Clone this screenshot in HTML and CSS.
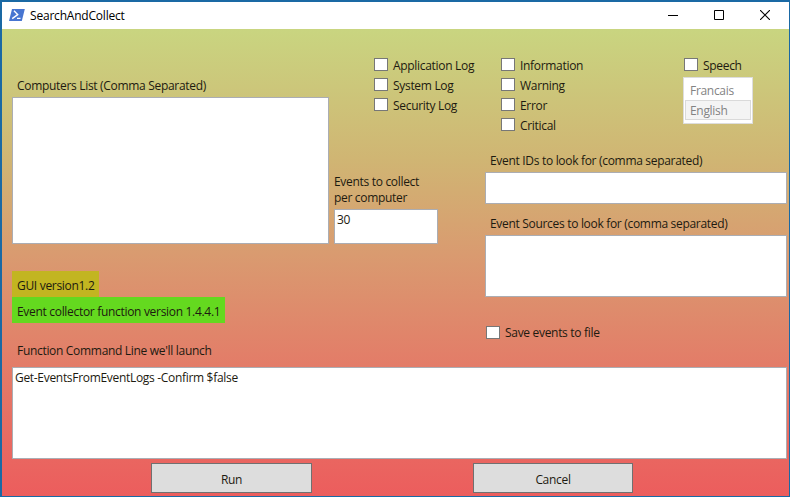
FILE: index.html
```html
<!DOCTYPE html>
<html lang="en">
<head>
<meta charset="utf-8">
<title>SearchAndCollect</title>
<link rel="stylesheet" href="styles.css">
</head>
<body>
<div class="window">
  <header class="titlebar">
    <svg class="logo" width="16" height="12" viewBox="0 0 16 12"><path d="M3 0H15.8L12.8 12H0Z" fill="#4775d1"/><path d="M5 1.8L8.7 5.6L3.2 9.6M8 9.4H11.5" fill="none" stroke="#fff" stroke-width="1.4"/></svg>
    <span class="title">SearchAndCollect</span>
    <div class="controls">
      <svg width="10" height="10" viewBox="0 0 10 10"><path d="M0 5.5H10" stroke="#000"/></svg>
      <svg width="10" height="10" viewBox="0 0 10 10"><path d="M.5.5H9.5V9.5H.5Z" fill="none" stroke="#000"/></svg>
      <svg width="10" height="10" viewBox="0 0 10 10"><path d="M0 0L10 10M10 0L0 10" stroke="#000" stroke-width="1.1"/></svg>
    </div>
  </header>
  <main class="client">
    <div class="columns">
      <section class="left">
        <div class="label computers-label">Computers List (Comma Separated)</div>
        <div class="box computers"></div>
        <div class="tag gui">GUI version1.2</div>
        <div class="tag collector">Event collector function version 1.4.4.1</div>
        <div class="label command-label">Function Command Line we'll launch</div>
      </section>
      <section class="middle">
        <div class="checks logs">
          <div class="check"><i></i><span>Application Log</span></div>
          <div class="check"><i></i><span>System Log</span></div>
          <div class="check"><i></i><span>Security Log</span></div>
        </div>
        <div class="count-label">Events to collect<br>per computer</div>
        <div class="box count">30</div>
      </section>
      <section class="right">
        <div class="options">
          <div class="checks">
            <div class="check"><i></i><span>Information</span></div>
            <div class="check"><i></i><span>Warning</span></div>
            <div class="check"><i></i><span>Error</span></div>
            <div class="check"><i></i><span>Critical</span></div>
          </div>
          <div class="speech">
            <div class="check"><i></i><span>Speech</span></div>
            <div class="list"><div>Francais</div><div class="selected">English</div></div>
          </div>
        </div>
        <div class="label ids-label">Event IDs to look for (comma separated)</div>
        <div class="box ids"></div>
        <div class="label sources-label">Event Sources to look for (comma separated)</div>
        <div class="box sources"></div>
        <div class="check save"><i></i><span>Save events to file</span></div>
      </section>
    </div>
    <div class="box command">Get-EventsFromEventLogs -Confirm $false</div>
    <div class="buttons"><div class="button run">Run</div><div class="button">Cancel</div></div>
  </main>
</div>
</body>
</html>
```
FILE: styles.css
```css
* { box-sizing: border-box; }
body { margin: 0; }
.window {
  width: 790px; height: 497px; overflow: hidden;
  border: solid #1a69a4; border-width: 2px 1px 1px 2px;
  font: 12px/16px "Open Sans", "Noto Sans", sans-serif;
  letter-spacing: -0.31px;
  color: #1d1a10; white-space: nowrap;
}
.titlebar { display: flex; align-items: center; height: 27px; padding: 0 19px 0 7px; background: #fff; color: #000; }
.logo { margin-top: -2px; }
.title { margin-left: 5px; letter-spacing: -0.2px; }
.controls { display: flex; gap: 36px; margin: -1px 0 0 auto; }
.controls svg, .logo { display: block; }
.client { height: 467px; padding: 0 2px 0 10px; background: linear-gradient(#c9d580 0%, #d0b573 28%, #d99b70 48%, #e37c68 72%, #ec5d5d 100%); }
.columns { display: grid; grid-template-columns: 322px 151px 302px; height: 338px; }
.box { background: #fff; border: 1px solid #abadb3; padding: 2px 2px 0; }
.label { padding: 1px 0 0 5px; height: 16px; }
.computers-label { margin-top: 48px; }
.computers { width: 317px; height: 147px; margin-top: 4px; }
.tag { width: max-content; height: 26px; padding: 7px 5px 3px; }
.gui { width: 87px; margin-top: 27px; background: #c2b521; }
.collector { width: 213px; background: #64d91f; }
.command-label { margin-top: 19px; }
.check { display: flex; align-items: center; height: 20px; }
.check i { width: 14px; height: 13px; margin: -1px 5px 0 0; background: #fff; border: 1px solid #777; }
.check span { padding-top: 2px; }
.logs { margin: 26px 0 0 40px; height: 60px; }
.count-label { margin-top: 58px; height: 32px; padding-top: 1px; }
.count { width: 104px; height: 35px; margin-top: 4px; }
.options { display: flex; padding-top: 26px; height: 123px; }
.options .checks { width: 183px; padding-left: 16px; }
.speech { padding-left: 16px; }
.list { width: 70px; height: 47px; margin: 2px 0 0 -1px; padding: 2px 1px; background: #fff; border: 1px solid #ddd; color: #838383; }
.list div { height: 20px; padding: 2px 4px 0; border: 1px solid transparent; }
.list .selected { background: #f4f4f4; border-color: #dadada; }
.ids { height: 32px; margin-top: 4px; }
.sources-label { margin-top: 11px; }
.sources { height: 62px; margin-top: 4px; }
.save { margin: 25px 0 0 1px; }
.save i { margin-top: 0; }
.command { height: 92px; }
.buttons { display: flex; gap: 161px; padding: 4px 0 0 139px; }
.button { width: 160px; height: 30px; padding-top: 1px; border: 1px solid #707070; background: #ddd; text-align: center; line-height: 30px; }
.run { width: 161px; }
```
